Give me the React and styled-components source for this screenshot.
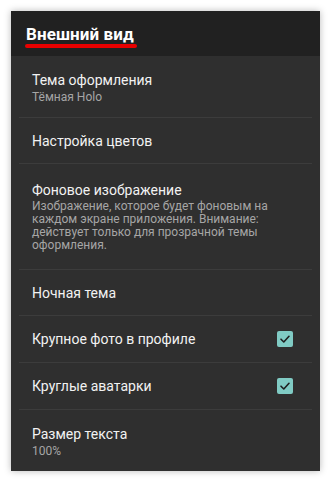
import React from "react";
import styled, { createGlobalStyle } from "styled-components";

const GlobalStyle = createGlobalStyle`
  html, body {
    margin: 0;
    padding: 0;
    background: #ffffff;
  }
  body {
    font-family: Roboto, "Noto Sans", sans-serif;
  }
`;

const Page = styled.div`
  width: 331px;
  height: 481px;
  box-sizing: border-box;
  padding: 11px;
  padding-bottom: 10px;
`;

const Phone = styled.div`
  width: 309px;
  height: 460px;
  display: flex;
  flex-direction: column;
  background: #2f2f2f;
  box-shadow: 0 0 7px rgba(0, 0, 0, 0.28);
  overflow: hidden;
`;

const Header = styled.header`
  height: 46px;
  box-sizing: border-box;
  padding: 13px 0 0 15px;
  background: #212121;
  display: flex;
  flex-direction: column;
  align-items: flex-start;
`;

const Title = styled.h1`
  margin: 0;
  font-size: 17px;
  line-height: 20px;
  font-weight: 700;
  color: #ffffff;
  letter-spacing: 0.1px;
`;

const Underline = styled.span`
  display: block;
  width: 112px;
  height: 4px;
  margin-left: -1px;
  border-radius: 2px;
  background: #e80000;
`;

const List = styled.div`
  display: flex;
  flex-direction: column;
`;

const paddings = {
  single: "13px 19px 12px 13px",
  check: "13px 19px 13px 13px",
  summary: "14px 19px 13px 13px",
  long: "16px 13px 17px 13px",
};

const Row = styled.div`
  margin: 0 8px;
  padding: ${(p) => paddings[p.$kind]};
  display: flex;
  align-items: center;
  justify-content: space-between;
  border-bottom: ${(p) => (p.$last ? "none" : "1px solid #3c3c3c")};
`;

const Texts = styled.div`
  display: flex;
  flex-direction: column;
`;

const Label = styled.div`
  font-size: 14px;
  line-height: 20px;
  color: #f2f2f2;
`;

const Summary = styled.div`
  font-size: 12px;
  line-height: ${(p) => (p.$multi ? "13px" : "14px")};
  color: #a6a6a6;
  max-width: 250px;
`;

const Check = styled.span`
  width: 16px;
  height: 16px;
  border-radius: 2px;
  background: #80cbc4;
  display: flex;
  align-items: center;
  justify-content: center;
  flex-shrink: 0;
`;

const Tick = () => (
  <svg width="12" height="12" viewBox="0 0 12 12">
    <path
      d="M2 6.2 L4.8 9 L10 3.3"
      fill="none"
      stroke="#1f1f1f"
      strokeWidth="1.6"
      strokeLinecap="round"
      strokeLinejoin="round"
    />
  </svg>
);

const items = [
  { label: "Тема оформления", summary: "Тёмная Holo", kind: "summary" },
  { label: "Настройка цветов", kind: "single" },
  {
    label: "Фоновое изображение",
    summary:
      "Изображение, которое будет фоновым на каждом экране приложения. Внимание: действует только для прозрачной темы оформления.",
    kind: "long",
  },
  { label: "Ночная тема", kind: "single" },
  { label: "Крупное фото в профиле", checked: true, kind: "check" },
  { label: "Круглые аватарки", checked: true, kind: "check" },
  { label: "Размер текста", summary: "100%", kind: "summary" },
];

export default function App() {
  return (
    <>
      <GlobalStyle />
      <Page>
        <Phone>
          <Header>
            <Title>Внешний вид</Title>
            <Underline />
          </Header>
          <List>
            {items.map((it, i) => (
              <Row key={it.label} $kind={it.kind} $last={i === items.length - 1}>
                <Texts>
                  <Label>{it.label}</Label>
                  {it.summary && (
                    <Summary $multi={it.kind === "long"}>{it.summary}</Summary>
                  )}
                </Texts>
                {it.checked && (
                  <Check>
                    <Tick />
                  </Check>
                )}
              </Row>
            ))}
          </List>
        </Phone>
      </Page>
    </>
  );
}
